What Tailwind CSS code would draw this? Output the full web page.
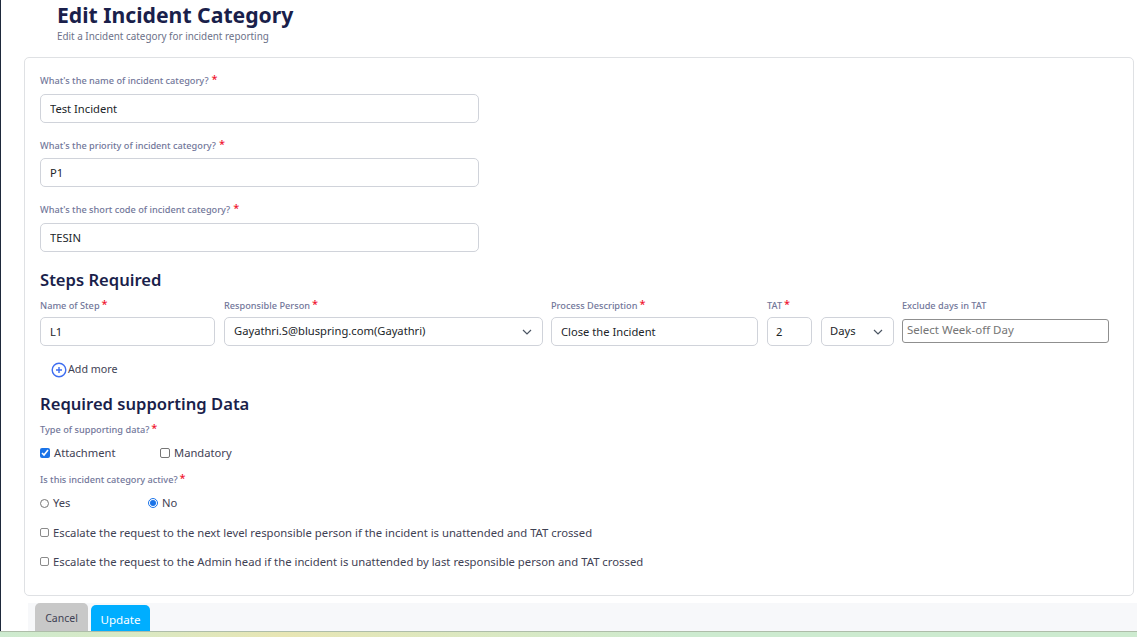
<!doctype html>
<html lang="en">
  <head>
    <meta charset="UTF-8" />
    <script src="https://cdn.jsdelivr.net/npm/@tailwindcss/browser@4"></script>
    <title>Edit Incident Category</title>
  </head>
  <body class="h-[637px] overflow-hidden bg-white font-['Noto_Sans',sans-serif] text-[#212529]">
    <div class="flex h-[631px] border-l-[1.5px] border-[#1e293b]">
      <div class="min-w-0 flex-1">
        <!-- Page header -->
        <div class="h-[57px] pl-[56px]">
          <h1 class="pb-[1px] text-[21.2px] leading-[29px] font-bold text-[#1a1f4b]">Edit Incident Category</h1>
          <p class="text-[9.9px] leading-[13px] text-[#6b7088]">Edit a Incident category for incident reporting</p>
        </div>

        <!-- Form card -->
        <div class="mr-[3px] ml-[23px] h-[539px] rounded-[5px] border border-[#dfe1e4] pt-[15px] pl-[15px]">
          <div class="flex h-[16px] items-center gap-[3px] text-[9.2px] font-medium text-[#72779a]">
            What's the name of incident category?<span class="-mt-[3px] text-[11px] text-[#f0142f]">*</span>
          </div>
          <input class="mt-[5px] block h-[29px] w-[439px] rounded-[5px] border border-[#d0d3da] px-[9px] pb-[1px] text-[11.2px]" value="Test Incident" />

          <div class="mt-[15px] flex h-[16px] items-center gap-[3px] text-[9.2px] font-medium text-[#72779a]">
            What's the priority of incident category?<span class="-mt-[3px] text-[11px] text-[#f0142f]">*</span>
          </div>
          <input class="mt-[4px] block h-[29px] w-[439px] rounded-[5px] border border-[#d0d3da] px-[9px] pb-[1px] text-[11.2px]" value="P1" />

          <div class="mt-[15px] flex h-[16px] items-center gap-[3px] text-[9.2px] font-medium text-[#72779a]">
            What's the short code of incident category?<span class="-mt-[3px] text-[11px] text-[#f0142f]">*</span>
          </div>
          <input class="mt-[5px] block h-[29px] w-[439px] rounded-[5px] border border-[#d0d3da] px-[9px] pb-[1px] text-[11.2px]" value="TESIN" />

          <!-- Steps -->
          <h2 class="mt-[16px] text-[16.6px] leading-[23px] font-semibold text-[#1a1f4b]">Steps Required</h2>
          <div class="mt-[7px] flex items-start">
            <div class="w-[175px]">
              <div class="flex h-[16px] items-center gap-[2px] text-[9.2px] font-medium text-[#72779a]">Name of Step<span class="-mt-[3px] text-[11px] text-[#f0142f]">*</span></div>
              <input class="mt-[3px] block h-[29px] w-full rounded-[5px] border border-[#d0d3da] px-[9px] pb-[1px] text-[11.2px]" value="L1" />
            </div>
            <div class="ml-[9px] w-[319px]">
              <div class="flex h-[16px] items-center gap-[2px] text-[9.2px] font-medium text-[#72779a]">Responsible Person<span class="-mt-[3px] text-[11px] text-[#f0142f]">*</span></div>
              <div class="mt-[3px] flex h-[29px] items-center justify-between rounded-[5px] border border-[#d0d3da] pr-[10px] pl-[9px] text-[11.2px]">
                Gayathri.S@bluspring.com(Gayathri)
                <svg class="h-[10px] w-[10px]" viewBox="0 0 10 10" fill="none" stroke="#4b5563" stroke-width="1.2"><path d="M1 3l4 4 4-4" /></svg>
              </div>
            </div>
            <div class="ml-[8px] w-[207px]">
              <div class="flex h-[16px] items-center gap-[2px] text-[9.2px] font-medium text-[#72779a]">Process Description<span class="-mt-[3px] text-[11px] text-[#f0142f]">*</span></div>
              <input class="mt-[3px] block h-[29px] w-full rounded-[5px] border border-[#d0d3da] px-[9px] pb-[1px] text-[11.2px]" value="Close the Incident" />
            </div>
            <div class="ml-[9px] w-[45px]">
              <div class="flex h-[16px] items-center gap-[2px] text-[9.2px] font-medium text-[#72779a]">TAT<span class="-mt-[3px] text-[11px] text-[#f0142f]">*</span></div>
              <input class="mt-[3px] block h-[29px] w-full rounded-[5px] border border-[#d0d3da] px-[8px] pb-[1px] text-[11.2px]" value="2" />
            </div>
            <div class="mt-[19px] ml-[9px] flex h-[29px] w-[73px] items-center justify-between rounded-[5px] border border-[#d0d3da] pr-[10px] pl-[8px] text-[11.2px]">
              Days
              <svg class="h-[10px] w-[10px]" viewBox="0 0 10 10" fill="none" stroke="#4b5563" stroke-width="1.2"><path d="M1 3l4 4 4-4" /></svg>
            </div>
            <div class="ml-[8px] w-[207px]">
              <div class="flex h-[16px] items-center text-[9.2px] font-medium text-[#72779a]">Exclude days in TAT</div>
              <input class="mt-[5px] block h-[24px] w-full rounded-[3px] border border-[#8f8f8f] px-[4px] pb-[4px] text-[11.5px] placeholder:text-[#757575]" placeholder="Select Week-off Day" />
            </div>
          </div>
          <div class="mt-[15px] ml-[11px] flex h-[17px] items-center text-[10.7px] text-[#3f4254]">
            <svg class="mr-[1px] h-[16px] w-[16px]" viewBox="0 0 16 16" fill="none" stroke="#3f6ef0"><circle cx="8" cy="8" r="6.8" stroke-width="1.4" /><path d="M8 5v6M5 8h6" stroke-width="1.4" /></svg>
            Add more
          </div>

          <!-- Supporting data -->
          <h2 class="mt-[14px] text-[16.6px] leading-[23px] font-semibold text-[#1a1f4b]">Required supporting Data</h2>
          <div class="mt-[7px] flex h-[16px] items-center gap-[2px] text-[9.2px] font-medium text-[#72779a]">Type of supporting data?<span class="-mt-[3px] text-[11px] text-[#f0142f]">*</span></div>
          <div class="mt-[7px] flex h-[16px] items-center text-[11.2px] text-[#3f4254]">
            <span class="flex w-[120px] items-center gap-[4px]"><input type="checkbox" checked class="h-[10px] w-[10px] accent-[#1a73e8]" />Attachment</span>
            <span class="flex items-center gap-[4px]"><input type="checkbox" class="h-[10px] w-[10px] appearance-none rounded-[2px] border border-[#767676]" />Mandatory</span>
          </div>
          <div class="mt-[11px] flex h-[16px] items-center gap-[2px] text-[9.2px] font-medium text-[#72779a]">Is this incident category active?<span class="-mt-[3px] text-[11px] text-[#f0142f]">*</span></div>
          <div class="mt-[7px] flex h-[16px] items-center text-[11.2px] text-[#3f4254]">
            <span class="flex w-[108px] items-center gap-[4px]"><input type="radio" name="active" class="h-[9px] w-[9px] appearance-none rounded-full border border-[#767676]" />Yes</span>
            <span class="flex items-center gap-[4px]"><input type="radio" name="active" checked class="h-[10px] w-[10px] accent-[#1a73e8]" />No</span>
          </div>
          <div class="mt-[14px] flex h-[16px] items-center gap-[4px] text-[11.3px] text-[#3f4254]"><input type="checkbox" class="-mt-[2px] h-[9px] w-[9px] appearance-none rounded-[2px] border border-[#8a8a8a]" />Escalate the request to the next level responsible person if the incident is unattended and TAT crossed</div>
          <div class="mt-[13px] flex h-[16px] items-center gap-[4px] text-[11.3px] text-[#3f4254]"><input type="checkbox" class="-mt-[2px] h-[9px] w-[9px] appearance-none rounded-[2px] border border-[#8a8a8a]" />Escalate the request to the Admin head if the incident is unattended by last responsible person and TAT crossed</div>
        </div>

        <!-- Footer actions -->
        <div class="mt-[7px] ml-[27px] flex h-[28px] items-end bg-[#f7f8fa] pl-[7px]">
          <button class="h-[28px] w-[53px] rounded-t-[5px] bg-[#c8c8c8] pt-[4px] text-[10.5px] text-[#3f4254]">Cancel</button>
          <button class="ml-[3px] h-[26px] w-[59px] rounded-t-[5px] bg-[#00aeff] pt-[3px] text-[11.6px] text-white">Update</button>
        </div>
      </div>
    </div>
    <div class="h-[6px] border-t border-[#aebda9] bg-gradient-to-r from-[#cdebd0] via-[#e8e6b4] via-25% to-[#cdebd0] to-60%"></div>
  </body>
</html>
